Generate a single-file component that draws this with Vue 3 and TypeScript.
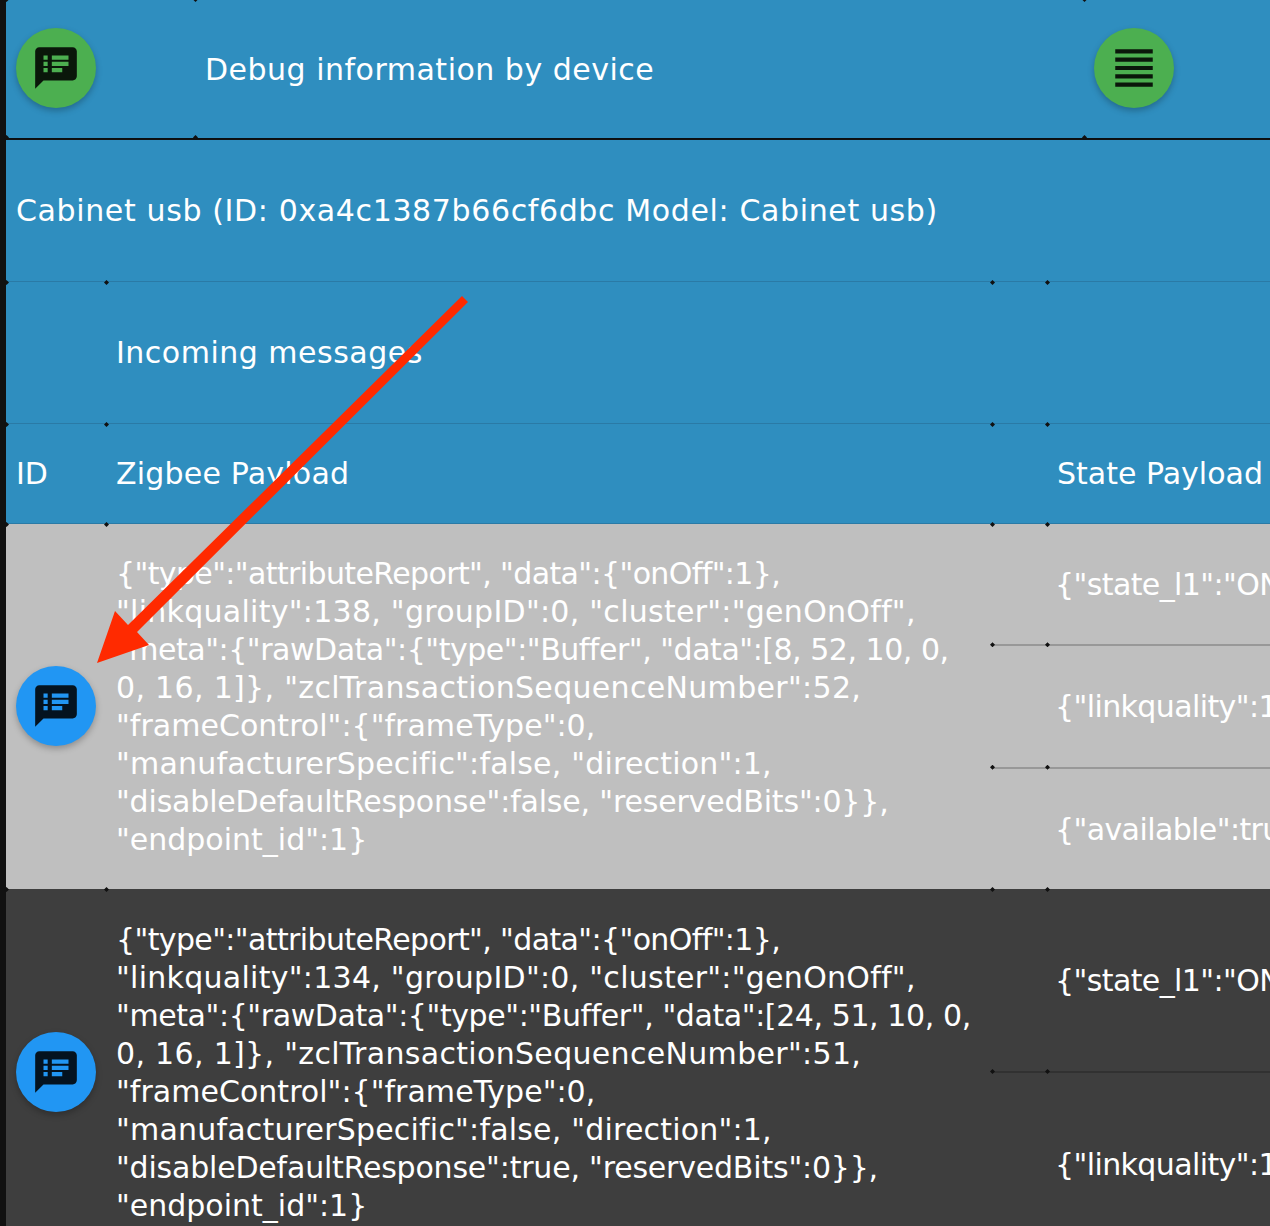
<script setup lang="ts">
const speakerNotes =
  'M20 2H4c-1.1 0-1.99.9-1.99 2L2 22l4-4h14c1.1 0 2-.9 2-2V4c0-1.1-.9-2-2-2zM8 14H6v-2h2v2zm0-3H6V9h2v2zm0-3H6V6h2v2zm7 6h-5v-2h5v2zm3-3h-8V9h8v2zm0-3h-8V6h8v2z'
const justify = 'M3 21h18v-2H3v2zm0-4h18v-2H3v2zm0-4h18v-2H3v2zm0-4h18V7H3v2zm0-6v2h18V3H3z'

interface Line {
  text: string
  track: number
}

interface Message {
  tone: string
  lines: Line[]
  states: string[]
}

const messages: Message[] = [
  {
    tone: 'light',
    lines: [
      { text: '{"type":"attributeReport", "data":{"onOff":1},', track: -0.62 },
      { text: '"linkquality":138, "groupID":0, "cluster":"genOnOff",', track: 0.27 },
      { text: '"meta":{"rawData":{"type":"Buffer", "data":[8, 52, 10, 0,', track: -0.47 },
      { text: '0, 16, 1]}, "zclTransactionSequenceNumber":52,', track: 0.32 },
      { text: '"frameControl":{"frameType":0,', track: 0.03 },
      { text: '"manufacturerSpecific":false, "direction":1,', track: 0.2 },
      { text: '"disableDefaultResponse":false, "reservedBits":0}},', track: -0.18 },
      { text: '"endpoint_id":1}', track: 0 },
    ],
    states: ['{"state_l1":"ON"}', '{"linkquality":138}', '{"available":true}'],
  },
  {
    tone: 'dark',
    lines: [
      { text: '{"type":"attributeReport", "data":{"onOff":1},', track: -0.62 },
      { text: '"linkquality":134, "groupID":0, "cluster":"genOnOff",', track: 0.27 },
      { text: '"meta":{"rawData":{"type":"Buffer", "data":[24, 51, 10, 0,', track: -0.41 },
      { text: '0, 16, 1]}, "zclTransactionSequenceNumber":51,', track: 0.32 },
      { text: '"frameControl":{"frameType":0,', track: 0.03 },
      { text: '"manufacturerSpecific":false, "direction":1,', track: 0.2 },
      { text: '"disableDefaultResponse":true, "reservedBits":0}},', track: -0.2 },
      { text: '"endpoint_id":1}', track: 0 },
    ],
    states: ['{"state_l1":"ON"}', '{"linkquality":134}'],
  },
]
</script>

<template>
  <div class="page">
    <div class="device-head">
      <div class="cell">
        <button class="fab fab--green">
          <svg viewBox="0 0 24 24"><path :d="speakerNotes" /></svg>
        </button>
      </div>
      <div class="cell heading">Debug information by device</div>
      <div class="cell">
        <button class="fab fab--green">
          <svg viewBox="0 0 24 24"><path :d="justify" /></svg>
        </button>
      </div>
    </div>

    <div class="device-name">Cabinet usb (ID: 0xa4c1387b66cf6dbc Model: Cabinet usb)</div>

    <div class="grid-row title-row">
      <div class="cell"></div>
      <div class="cell heading">Incoming messages</div>
      <div class="cell"></div>
      <div class="cell"></div>
    </div>

    <div class="grid-row label-row">
      <div class="cell">ID</div>
      <div class="cell label-zigbee">Zigbee Payload</div>
      <div class="cell"></div>
      <div class="cell nowrap">State Payload</div>
    </div>

    <div v-for="m in messages" :key="m.lines[1].text" class="grid-row msg" :class="'msg--' + m.tone">
      <div class="cell fab-cell">
        <button class="fab fab--blue">
          <svg viewBox="0 0 24 24"><path :d="speakerNotes" /></svg>
        </button>
      </div>
      <div class="cell payload">
        <div v-for="line in m.lines" :key="line.text" :style="{ letterSpacing: line.track + 'px' }">
          {{ line.text }}
        </div>
      </div>
      <div class="states">
        <div v-for="s in m.states" :key="s" class="state">{{ s }}</div>
      </div>
    </div>

    <svg class="arrow" width="1270" height="1226" viewBox="0 0 1270 1226">
      <polygon points="468,302 462,296 128,625 115,611 97,663 149,645 137,632" fill="#ff2a00" />
    </svg>
  </div>
</template>

<style scoped>
.page {
  position: relative;
  width: 1270px;
  height: 1226px;
  box-sizing: border-box;
  padding-left: 6px;
  overflow: hidden;
  background: #111;
  color: #fff;
  font-family: "DejaVu Sans", "Open Sans", sans-serif;
  font-size: 30px;
  line-height: 38px;
}

.heading {
  letter-spacing: 0.5px;
  padding-top: 2px;
}

.device-head .heading {
  padding-top: 4px;
}

.label-zigbee {
  letter-spacing: 0.2px;
}

.device-head {
  display: grid;
  grid-template-columns: 189px 889px 1fr;
  height: 140px;
  margin-top: -1px;
  padding-bottom: 1px;
  background: #2f8ebf;
  border-bottom: 1px solid #0b0f12;
  box-sizing: border-box;
}

.device-name {
  height: 142px;
  margin-top: 1px;
  padding-left: 10px;
  box-sizing: border-box;
  display: flex;
  align-items: center;
  letter-spacing: 0.63px;
  background: #2f8ebf;
  box-shadow: inset 0 -1px 0 #2a7aa6;
}

.grid-row {
  display: grid;
  grid-template-columns: 100px 886px 1fr;
}

.title-row,
.label-row {
  grid-template-columns: 100px 886px 55px 1fr;
  background: #2f8ebf;
  box-shadow: inset 0 -1px 0 #2a7aa6;
}

.title-row {
  height: 142px;
}

.label-row {
  height: 100px;
}

.msg {
  height: 365px;
}

.msg--light {
  background: #bfbfbf;
}

.msg--light .fab-cell {
  padding-bottom: 1px;
}

.msg--dark {
  background: #3e3e3e;
  height: 366px;
}

.cell {
  position: relative;
  display: flex;
  align-items: center;
  padding: 0 10px;
  min-width: 0;
}

/* small junction dots where the table cells meet */
.cell::before,
.state::before,
.state::after {
  content: "";
  position: absolute;
  left: -2px;
  bottom: -3px;
  width: 5px;
  height: 5px;
  background: #111;
  clip-path: polygon(50% 0, 100% 50%, 50% 100%, 0 50%);
}

.state::after {
  left: 53px;
}

.title-row .cell::after,
.device-head .cell::after {
  content: "";
  position: absolute;
  left: -2px;
  top: -2px;
  width: 5px;
  height: 5px;
  background: #111;
  clip-path: polygon(50% 0, 100% 50%, 50% 100%, 0 50%);
}

.nowrap {
  white-space: nowrap;
}

.payload {
  display: block;
  padding-top: 31px;
  white-space: nowrap;
}

.msg--dark .payload {
  padding-top: 32px;
}

.states {
  display: flex;
  flex-direction: column;
  min-width: 0;
  position: relative;
}

.state {
  position: relative;
  flex: 1;
  display: flex;
  align-items: center;
  padding: 2px 0 0 63px;
  letter-spacing: -0.6px;
  white-space: nowrap;
  border-bottom: 2px solid rgba(0, 0, 0, 0.2);
  box-sizing: border-box;
}

.state:last-child {
  border-bottom: none;
}

.fab {
  width: 80px;
  height: 80px;
  padding: 0;
  border: none;
  border-radius: 50%;
  display: flex;
  align-items: center;
  justify-content: center;
  box-shadow: 0 3px 6px rgba(0, 0, 0, 0.25);
}

.fab svg {
  width: 50px;
  height: 50px;
  fill: rgba(0, 0, 0, 0.87);
}

.fab--green {
  background: #4caf50;
}

.fab--blue {
  background: #2196f3;
}

.arrow {
  position: absolute;
  left: 0;
  top: 0;
  pointer-events: none;
}
</style>

<style>
html,
body {
  margin: 0;
  overflow: hidden;
}
</style>
